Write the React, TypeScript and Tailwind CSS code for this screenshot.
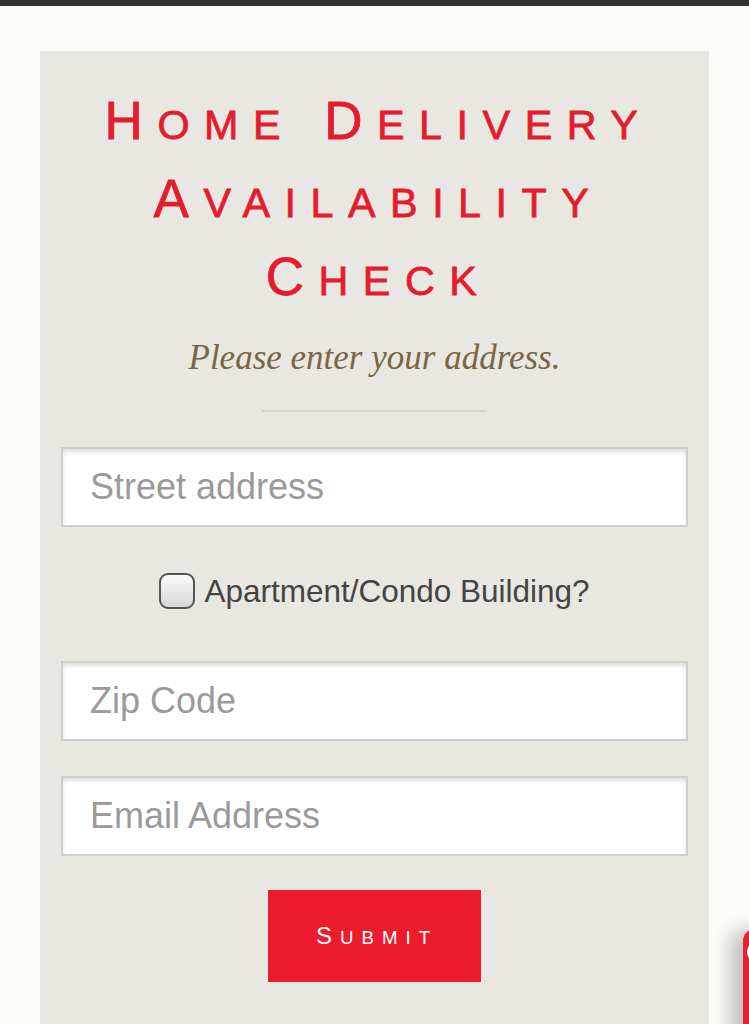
import { useState } from "react"

const fields = ["Street address", "Zip Code", "Email Address"]

// Copperplate-style small caps: full-size initial, smaller uppercase rest
function Caps({ word }: { word: string }) {
  return (
    <>
      {word[0]}
      <span className="text-[0.78em] leading-none uppercase">{word.slice(1)}</span>
    </>
  )
}

function TextField({ placeholder }: { placeholder: string }) {
  return (
    <input
      type="text"
      placeholder={placeholder}
      className="block h-[80px] w-full border-2 border-[#cfcfcd] bg-white pl-[27px] text-[36px] text-[#333] placeholder:text-[#9a9a9a] shadow-[inset_0_3px_4px_rgba(0,0,0,0.13)] outline-none font-['Liberation_Sans',Arial,sans-serif]"
    />
  )
}

export default function App() {
  const [apartment, setApartment] = useState(false)

  return (
    <div className="relative min-h-[1024px] w-full overflow-hidden bg-[#fcfcfa] font-['Liberation_Sans',Arial,sans-serif]">
      <div className="h-[6px] w-full bg-[#333331]" />

      <div className="mx-[40px] mt-[45px] bg-[#e8e7e1] px-[21px] pt-[31px] pb-[60px]">
        <h1 className="pl-[8px] text-center text-[53px] leading-[78px] tracking-[14.5px] text-[#e31d2f] [-webkit-text-stroke:0.8px_#e31d2f]">
          <Caps word="Home" /> <Caps word="Delivery" />
          <br />
          <Caps word="Availability" />
          <br />
          <Caps word="Check" />
        </h1>

        <p className="mt-[22px] text-center text-[35px] leading-[40px] italic text-[#7b6542] font-['Liberation_Serif','Times_New_Roman',serif]">
          Please enter your address.
        </p>

        <div className="mx-auto mt-[32px] h-[2px] w-[225px] bg-[#d3d2cc]" />

        <div className="mt-[35px]">
          <TextField placeholder={fields[0]} />
        </div>

        <label className="mt-[46px] flex cursor-pointer items-center justify-center gap-[9px]">
          <input
            type="checkbox"
            checked={apartment}
            onChange={(e) => setApartment(e.target.checked)}
            className="sr-only"
          />
          <span className="h-[36px] w-[36px] rounded-[9px] border-2 border-[#555] bg-gradient-to-b from-[#fbfbfb] to-[#d6d6d6]" />
          <span className="text-[31.5px] leading-[36px] text-[#444]">Apartment/Condo Building?</span>
        </label>

        <div className="mt-[52px]">
          <TextField placeholder={fields[1]} />
        </div>
        <div className="mt-[35px]">
          <TextField placeholder={fields[2]} />
        </div>

        <div className="mt-[34px] flex justify-center">
          <button className="h-[92px] w-[213px] bg-[#ec1c2e] pl-[5px] text-[24px] leading-none tracking-[8px] text-white">
            <Caps word="Submit" />
          </button>
        </div>
      </div>

      <div className="absolute left-[743px] top-[929px] h-[120px] w-[60px] rounded-tl-[12px] bg-[#e8202f] shadow-[-14px_0_18px_rgba(0,0,0,0.22)]">
        <div className="absolute left-[4px] top-[12px] h-[22px] w-[22px] rounded-full border-[3px] border-white" />
      </div>
    </div>
  )
}
